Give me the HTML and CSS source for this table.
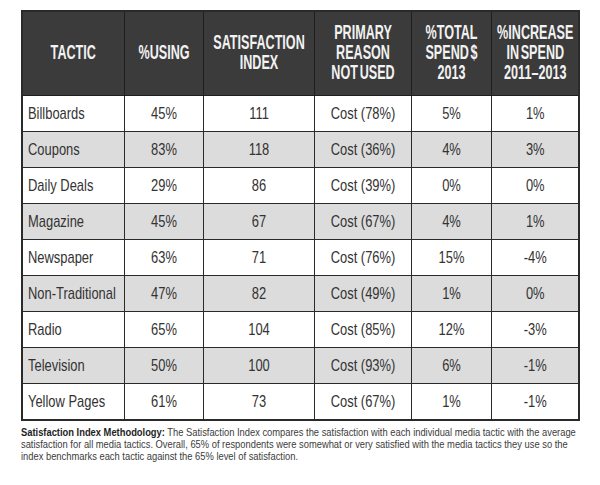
FILE: index.html
```html
<!DOCTYPE html>
<html>
<head>
<meta charset="utf-8">
<link rel="stylesheet" href="styles.css">
</head>
<body>
<div class="page">
  <table class="media">
    <colgroup>
      <col class="c1"><col class="c2"><col class="c3"><col class="c4"><col class="c5"><col class="c6">
    </colgroup>
    <thead>
      <tr>
        <th><span class="hd">TACTIC</span></th>
        <th><span class="hd">%USING</span></th>
        <th><span class="hd">SATISFACTION<br>INDEX</span></th>
        <th><span class="hd">PRIMARY<br>REASON<br>NOT USED</span></th>
        <th><span class="hd">%TOTAL<br>SPEND $<br>2013</span></th>
        <th><span class="hd">%INCREASE<br>IN SPEND<br>2011–2013</span></th>
      </tr>
    </thead>
    <tbody>
      <tr><td class="name"><span class="t">Billboards</span></td><td><span class="t">45%</span></td><td><span class="t">111</span></td><td><span class="t">Cost (78%)</span></td><td><span class="t">5%</span></td><td><span class="t">1%</span></td></tr>
      <tr class="alt"><td class="name"><span class="t">Coupons</span></td><td><span class="t">83%</span></td><td><span class="t">118</span></td><td><span class="t">Cost (36%)</span></td><td><span class="t">4%</span></td><td><span class="t">3%</span></td></tr>
      <tr><td class="name"><span class="t">Daily Deals</span></td><td><span class="t">29%</span></td><td><span class="t">86</span></td><td><span class="t">Cost (39%)</span></td><td><span class="t">0%</span></td><td><span class="t">0%</span></td></tr>
      <tr class="alt"><td class="name"><span class="t">Magazine</span></td><td><span class="t">45%</span></td><td><span class="t">67</span></td><td><span class="t">Cost (67%)</span></td><td><span class="t">4%</span></td><td><span class="t">1%</span></td></tr>
      <tr><td class="name"><span class="t">Newspaper</span></td><td><span class="t">63%</span></td><td><span class="t">71</span></td><td><span class="t">Cost (76%)</span></td><td><span class="t">15%</span></td><td><span class="t">-4%</span></td></tr>
      <tr class="alt"><td class="name"><span class="t">Non-Traditional</span></td><td><span class="t">47%</span></td><td><span class="t">82</span></td><td><span class="t">Cost (49%)</span></td><td><span class="t">1%</span></td><td><span class="t">0%</span></td></tr>
      <tr><td class="name"><span class="t">Radio</span></td><td><span class="t">65%</span></td><td><span class="t">104</span></td><td><span class="t">Cost (85%)</span></td><td><span class="t">12%</span></td><td><span class="t">-3%</span></td></tr>
      <tr class="alt"><td class="name"><span class="t">Television</span></td><td><span class="t">50%</span></td><td><span class="t">100</span></td><td><span class="t">Cost (93%)</span></td><td><span class="t">6%</span></td><td><span class="t">-1%</span></td></tr>
      <tr><td class="name"><span class="t">Yellow Pages</span></td><td><span class="t">61%</span></td><td><span class="t">73</span></td><td><span class="t">Cost (67%)</span></td><td><span class="t">1%</span></td><td><span class="t">-1%</span></td></tr>
    </tbody>
  </table>
  <div class="noteWrap">
    <p class="note"><b>Satisfaction Index Methodology:</b> The Satisfaction Index compares the satisfaction with each individual media tactic with the average<br>satisfaction for all media tactics. Overall, 65% of respondents were somewhat or very satisfied with the media tactics they use so the<br>index benchmarks each tactic against the 65% level of satisfaction.</p>
  </div>
</div>
</body>
</html>
```

FILE: styles.css
```css
html, body {
  margin: 0;
  padding: 0;
  background: #ffffff;
  overflow: hidden;
}

.page {
  padding: 10px 0 0 21px;
  width: 557px;
}

.media {
  border-collapse: collapse;
  table-layout: fixed;
  width: 557px;
  font-family: "Liberation Sans", Arial, sans-serif;
  color: #333333;
  border: 2px solid #2a2a2a;
}

.c1 { width: 102px; }
.c2 { width: 79px; }
.c3 { width: 111px; }
.c4 { width: 97px; }
.c5 { width: 80px; }
.c6 { width: 88px; }

.media th {
  background: #3b3b3b;
  color: #f2f2f2;
  height: 79px;
  padding: 0 0 4px 0;
  border: 1.5px solid #1e1e1e;
  text-align: center;
  vertical-align: middle;
  font-weight: bold;
  font-size: 21px;
  line-height: 20px;
  white-space: nowrap;
}

.hd {
  display: block;
  margin: 0 -80px;
  transform: scaleX(0.6);
  word-spacing: -3px;
}

.media td {
  height: 35px;
  padding: 0;
  border: 1.5px solid #2a2a2a;
  text-align: center;
  vertical-align: middle;
  font-size: 17px;
  white-space: nowrap;
}

.t {
  display: block;
  margin: 0 -60px;
  transform: scaleX(0.76);
}

.media td.name {
  text-align: left;
  padding-left: 5px;
}

.media td.name .t {
  margin: 0 -60px 0 0;
  transform-origin: 0 50%;
}

.media tr.alt td {
  background: #dcdcdc;
}

.noteWrap {
  width: 557px;
  margin-top: 5px;
}

.note {
  margin: 0;
  width: 700px;
  transform: scaleX(0.813);
  transform-origin: 0 0;
  white-space: nowrap;
  font-family: "Liberation Sans", Arial, sans-serif;
  font-size: 11.5px;
  line-height: 12px;
  color: #3c3c3c;
}

.note b {
  color: #1e1e1e;
}
```
